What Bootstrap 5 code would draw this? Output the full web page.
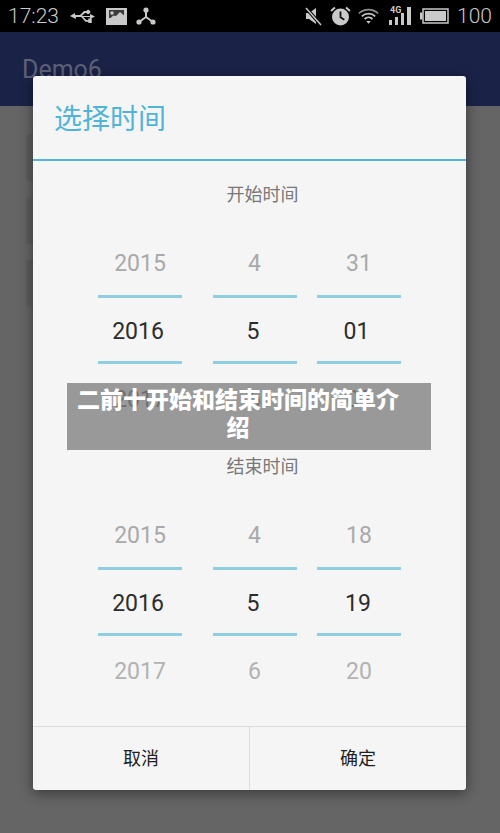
<!DOCTYPE html>
<html lang="zh">
<head>
<meta charset="utf-8">
<title>选择时间</title>
<link href="https://cdn.jsdelivr.net/npm/bootstrap@5.3.0/dist/css/bootstrap.min.css" rel="stylesheet">
<style>
html,body{margin:0;background:#656565;}
.screen{width:500px;height:833px;overflow:hidden;background:#656565;font-family:"Roboto","Noto Sans CJK SC",sans-serif;}
.sbar{height:32px;background:#000;color:#c9c9c9;padding:0 8px 0 8px;}
.sbar .clock{font-size:21px;font-weight:300;line-height:32px;width:62px;}
.sbar .pct{font-size:21px;font-weight:300;line-height:32px;}
.sbar svg{display:block;flex:none;}
.gap-usb{margin-left:10px;}
.gap-node{margin-left:9px;}
.gap-alarm{margin-left:8px;}
.gap-wifi{margin-left:7px;}
.gap-sig{margin-left:10px;width:24px;height:20px;flex:none;}
.gap-batt{margin-left:7px;}
.gap-pct{margin-left:8px;}
.tag4g{left:1px;top:-1px;font-size:9px;font-weight:700;line-height:11px;color:#c9c9c9;}
.appbar{height:74px;background:#1a2248;color:#5c6178;font-size:25px;padding:23px 0 0 22px;line-height:30px;}
.backlist{padding:28px 0 0 26px;gap:16px;}
.backitem{width:300px;height:47px;background:#5e5e5e;border-radius:3px;}
.sheet{left:33px;top:76px;width:433px;height:714px;background:#f5f5f5;border-radius:3px;box-shadow:0 3px 14px rgba(0,0,0,.45);}
.sheet-title{height:83px;color:#4fb4d6;font-size:28px;line-height:87px;padding-left:21px;}
.sheet-rule{height:2px;background:#4fb4d6;}
.segment{height:272px;}
.seg-label{color:#787878;font-size:18px;line-height:26px;padding:21px 0 0 26px;margin-bottom:22px;text-align:center;}
.wheels{padding-left:65px;font-size:23px;text-align:center;}
.wheel{width:84px;}
.w1{margin-right:31px;}
.w2{margin-right:20px;}
.wheel-up{height:65px;line-height:68px;color:#a9a9a9;}
.wheel-sel{height:69px;line-height:60px;padding-top:4px;border-top:3px solid #8fcfdf;border-bottom:3px solid #8fcfdf;color:#2c2c2c;}
.wheel-down{height:67px;line-height:64px;padding-top:4px;color:#b2b2b2;}
.nudge-4{padding-right:4px;}
.nudge-2{padding-right:2px;}
.nudge-5{padding-right:5px;}
.left-1{padding-right:1px;}
.sheet-foot{height:64px;border-top:1px solid #dcdcdc;color:#1f1f1f;font-size:18px;}
.foot-btn{line-height:64px;text-align:center;flex:1 1 0;}
.foot-btn + .foot-btn{border-left:1px solid #dcdcdc;}
.ribbon{left:67px;top:383px;width:364px;height:67px;background:rgba(0,0,0,.375);color:#fff;font-weight:900;font-size:23px;line-height:28px;padding:1px 30px 0 8px;text-align:center;font-family:"Noto Sans CJK SC",sans-serif;}
</style>
</head>
<body>
<div class="screen position-relative d-flex flex-column">
  <div class="sbar d-flex align-items-center">
    <div class="clock">17:23</div>
    <svg width="26" height="14" viewBox="0 0 26 14" fill="#c9c9c9" stroke="none">
      <path d="M0 7l5-3v2h5l4-4h2.500a2 2 0 1 1 0 2h-1.600l-3.200 3h8.300v-2l5 2.500-5 2.500v-2h-6.700l3 3h2v-1.500h3.500v4.500h-3.500v-1.300h-2.800l-4.200-4.700h-5.400v2z"/>
    </svg>
    <svg class="gap-usb" width="21" height="17" viewBox="0 0 21 17">
      <rect x="0" y="0" width="21" height="17" fill="#c9c9c9"/>
      <path d="M3 2h15v5.500l-4-3.500-4 4-2.500-.5-3 2.500H3z" fill="#222" opacity=".85"/>
      <circle cx="6" cy="5" r="1.800" fill="#c9c9c9"/>
    </svg>
    <svg class="gap-node" width="20" height="18" viewBox="0 0 20 18" fill="#c9c9c9" stroke="#c9c9c9">
      <path d="M10 3v7M10 10l-7 5M10 10l7 5" stroke-width="2" fill="none"/>
      <circle cx="10" cy="3" r="2.600" stroke="none"/>
      <circle cx="3" cy="15" r="2.600" stroke="none"/>
      <circle cx="17" cy="15" r="2.600" stroke="none"/>
    </svg>
    <div class="flex-grow-1"></div>
    <svg width="17" height="19" viewBox="0 0 17 19" fill="#c9c9c9">
      <path d="M1 6h3l7-5v16l-7-5H1z"/>
      <path d="M1 1l15 17" stroke="#000" stroke-width="3.500"/>
      <path d="M1 1l15 17" stroke="#c9c9c9" stroke-width="1.500"/>
    </svg>
    <svg class="gap-alarm" width="21" height="20" viewBox="0 0 21 20">
      <circle cx="10.500" cy="11" r="8.500" fill="#c9c9c9"/>
      <path d="M10.500 5.500v5.800l3.800 2.500" fill="none" stroke="#111" stroke-width="1.800"/>
      <path d="M1 5l4-3.500M20 5l-4-3.500" stroke="#c9c9c9" stroke-width="2"/>
    </svg>
    <svg class="gap-wifi" width="21" height="17" viewBox="0 0 21 17" fill="none" stroke="#c9c9c9" stroke-width="1.700">
      <path d="M.8 5.500a14 14 0 0 1 19.400 0" stroke="#8f8f8f"/>
      <path d="M3.800 8.300a10 10 0 0 1 13.400 0"/>
      <path d="M6.500 11a6 6 0 0 1 8 0"/>
      <path d="M8.200 13l2.300 2.800 2.300-2.800z" fill="#c9c9c9" stroke="none"/>
    </svg>
    <div class="gap-sig position-relative">
      <svg width="24" height="20" viewBox="0 0 24 20" fill="#c9c9c9">
        <rect x="0" y="14" width="3" height="5"/>
        <rect x="6" y="11" width="3" height="8"/>
        <rect x="12" y="7" width="3" height="12"/>
        <rect x="18" y="1" width="4" height="18"/>
      </svg>
      <span class="tag4g position-absolute">4G</span>
    </div>
    <svg class="gap-batt" width="29" height="16" viewBox="0 0 29 16">
      <rect x="0" y="4.500" width="2.500" height="7" fill="#c9c9c9"/>
      <rect x="3" y="1" width="25" height="14" fill="#000" stroke="#c9c9c9" stroke-width="1.500"/>
      <rect x="5" y="3" width="21" height="10" fill="#c9c9c9"/>
    </svg>
    <div class="pct gap-pct">100</div>
  </div>
  <div class="appbar">Demo6</div>
  <div class="backlist d-flex flex-column">
    <div class="backitem"></div>
    <div class="backitem"></div>
    <div class="backitem"></div>
  </div>

  <div class="sheet position-absolute d-flex flex-column">
    <div class="sheet-title">选择时间</div>
    <div class="sheet-rule"></div>
    <div class="segment">
      <div class="seg-label">开始时间</div>
      <div class="wheels d-flex">
        <div class="wheel w1"><div class="wheel-up">2015</div><div class="wheel-sel nudge-4">2016</div><div class="wheel-down">2017</div></div>
        <div class="wheel w2"><div class="wheel-up left-1">4</div><div class="wheel-sel nudge-4">5</div><div class="wheel-down left-1">6</div></div>
        <div class="wheel"><div class="wheel-up">31</div><div class="wheel-sel nudge-5">01</div><div class="wheel-down">02</div></div>
      </div>
    </div>
    <div class="segment">
      <div class="seg-label">结束时间</div>
      <div class="wheels d-flex">
        <div class="wheel w1"><div class="wheel-up">2015</div><div class="wheel-sel nudge-4">2016</div><div class="wheel-down">2017</div></div>
        <div class="wheel w2"><div class="wheel-up left-1">4</div><div class="wheel-sel nudge-4">5</div><div class="wheel-down left-1">6</div></div>
        <div class="wheel"><div class="wheel-up">18</div><div class="wheel-sel nudge-2">19</div><div class="wheel-down">20</div></div>
      </div>
    </div>
    <div class="flex-grow-1"></div>
    <div class="sheet-foot d-flex">
      <div class="foot-btn">取消</div>
      <div class="foot-btn">确定</div>
    </div>
  </div>

  <div class="ribbon position-absolute">二前十开始和结束时间的简单介绍</div>
</div>
<script src="https://cdn.jsdelivr.net/npm/bootstrap@5.3.0/dist/js/bootstrap.bundle.min.js"></script>
</body>
</html>
